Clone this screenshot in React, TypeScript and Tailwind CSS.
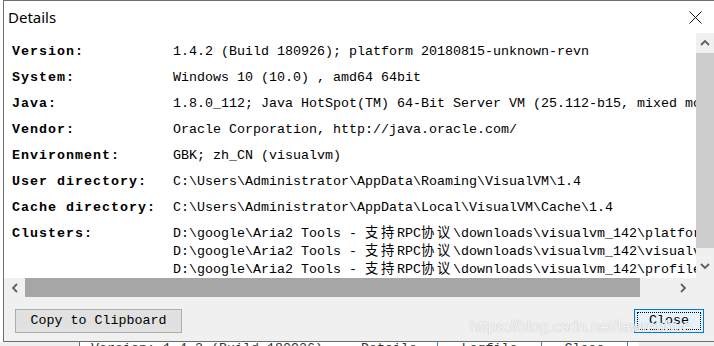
import React from 'react';

const MONO = 'font-["Liberation_Mono","Noto_Sans_CJK_SC",monospace]';

type Row = { label: string; lines: React.ReactNode[] };

// CJK glyphs take two cells in the original monospace font
function Cjk({ children }: { children: string }) {
  return <span className="tracking-[2.67px]">{children}</span>;
}

function cluster(tail: string) {
  return (
    <>
      {'D:\\google\\Aria2 Tools - '}
      <Cjk>支持</Cjk>
      RPC
      <Cjk>协议</Cjk>
      {'\\downloads\\visualvm_142\\' + tail}
    </>
  );
}

const rows: Row[] = [
  { label: 'Version:', lines: ['1.4.2 (Build 180926); platform 20180815-unknown-revn'] },
  { label: 'System:', lines: ['Windows 10 (10.0) , amd64 64bit'] },
  { label: 'Java:', lines: ['1.8.0_112; Java HotSpot(TM) 64-Bit Server VM (25.112-b15, mixed mode)'] },
  { label: 'Vendor:', lines: ['Oracle Corporation, http://java.oracle.com/'] },
  { label: 'Environment:', lines: ['GBK; zh_CN (visualvm)'] },
  { label: 'User directory:', lines: ['C:\\Users\\Administrator\\AppData\\Roaming\\VisualVM\\1.4'] },
  { label: 'Cache directory:', lines: ['C:\\Users\\Administrator\\AppData\\Local\\VisualVM\\Cache\\1.4'] },
  { label: 'Clusters:', lines: [cluster('platform'), cluster('visualvm'), cluster('profiler')] },
];

function Chevron({ dir }: { dir: 'up' | 'down' | 'left' | 'right' }) {
  const pts = {
    up: '1,6 5,2 9,6',
    down: '1,2 5,6 9,2',
    left: '6,1 2,5 6,9',
    right: '2,1 6,5 2,9',
  }[dir];
  const vertical = dir === 'up' || dir === 'down';
  return (
    <svg width={vertical ? 10 : 8} height={vertical ? 8 : 10} viewBox={vertical ? '0 0 10 8' : '0 0 8 10'}>
      <polyline points={pts} fill="none" stroke="#606060" strokeWidth="1.8" />
    </svg>
  );
}

export default function App() {
  return (
    <div className="relative h-[346px] w-[714px] overflow-hidden bg-white">
      {/* dialog */}
      <div className="ml-[3px] flex h-[342px] flex-col border-l border-t border-b border-[#6e6e6e] bg-white">
        {/* title bar */}
        <div className="flex h-[32px] shrink-0 items-center justify-between pl-[4px] pr-[12px]">
          <span className='font-["Noto_Sans",sans-serif] text-[15px] text-black'>Details</span>
          <svg width="13" height="13" viewBox="0 0 13 13">
            <path d="M0.5 0.5 L12.5 12.5 M12.5 0.5 L0.5 12.5" stroke="#111" strokeWidth="1" />
          </svg>
        </div>

        {/* scroll area */}
        <div className="flex h-[245px] shrink-0">
          <div className={`flex flex-1 flex-col gap-[8px] overflow-hidden bg-white pl-[8px] pt-[10px] ${MONO} text-[13.33px] leading-[18px] text-black`}>
            {rows.map((r) => (
              <div key={r.label} className="flex">
                <div className="w-[161px] shrink-0 whitespace-pre font-bold tracking-[1px]">{r.label}</div>
                <div className="flex flex-col">
                  {r.lines.map((l, i) => (
                    <div key={i} className="whitespace-pre">{l}</div>
                  ))}
                </div>
              </div>
            ))}
          </div>
          <div className="flex w-[18px] shrink-0 flex-col bg-[#f0f0f0]">
            <div className="flex h-[20px] items-center justify-center"><Chevron dir="up" /></div>
            <div className="h-[195px] bg-[#cdcdcd]" />
            <div className="flex-1" />
            <div className="mb-[2px] flex h-[20px] items-center justify-center"><Chevron dir="down" /></div>
          </div>
        </div>

        {/* horizontal scrollbar */}
        <div className="flex h-[19px] shrink-0 bg-[#f0f0f0]">
          <div className="flex w-[21px] items-center justify-center"><Chevron dir="left" /></div>
          <div className="w-[615px] bg-[#a6a6a6]" />
          <div className="flex-1" />
          <div className="flex w-[20px] items-center justify-center"><Chevron dir="right" /></div>
          <div className="w-[21px]" />
        </div>

        {/* buttons */}
        <div className={`flex flex-1 items-start justify-between bg-[#f0f0f0] pl-[11px] pr-[10px] pt-[12px] ${MONO} text-[13.33px] text-black`}>
          <button type="button" className="flex h-[24px] w-[167px] items-center justify-center border border-[#adadad] bg-[#e1e1e1]">
            Copy to Clipboard
          </button>
          <button type="button" className="flex h-[24px] w-[70px] items-center justify-center border border-[#0078d7] bg-[#e5f1fb] p-[2px]">
            <span className="flex h-full w-full items-center justify-center border border-dotted border-black">Close</span>
          </button>
        </div>
      </div>

      {/* window behind the dialog */}
      <div className={`flex h-[4px] overflow-hidden ${MONO} text-[13.33px] leading-[18px] text-[#333]`}>
        <div className="w-[80px] shrink-0 border-r border-[#6e6e6e] bg-[#f0f0f0]" />
        <div className="-mt-[2px] flex flex-1 items-start bg-white">
          <span className="ml-[11px] w-[250px] whitespace-pre">Version: 1.4.2 (Build 180926)</span>
          <span className="w-[96px] text-center">Details</span>
          <span className="h-[18px] border-l border-[#3c7fb1]" />
          <span className="w-[103px] text-center">Logfile</span>
          <span className="h-[18px] border-l border-[#3c7fb1]" />
          <span className="w-[85px] text-center">Close</span>
          <span className="h-[18px] border-l border-[#3c7fb1]" />
          <span className="w-[11px]" />
          <span className="h-[18px] flex-1 bg-[#f0f0f0]" />
        </div>
      </div>

      {/* watermark */}
      <div className='pointer-events-none absolute left-[470px] top-[315px] whitespace-pre font-["Liberation_Sans",sans-serif] text-[16px] text-white/90 [text-shadow:0_0_1px_#a0a0a0]'>
        https://blog.csdn.net/lawrenhue
      </div>
    </div>
  );
}
